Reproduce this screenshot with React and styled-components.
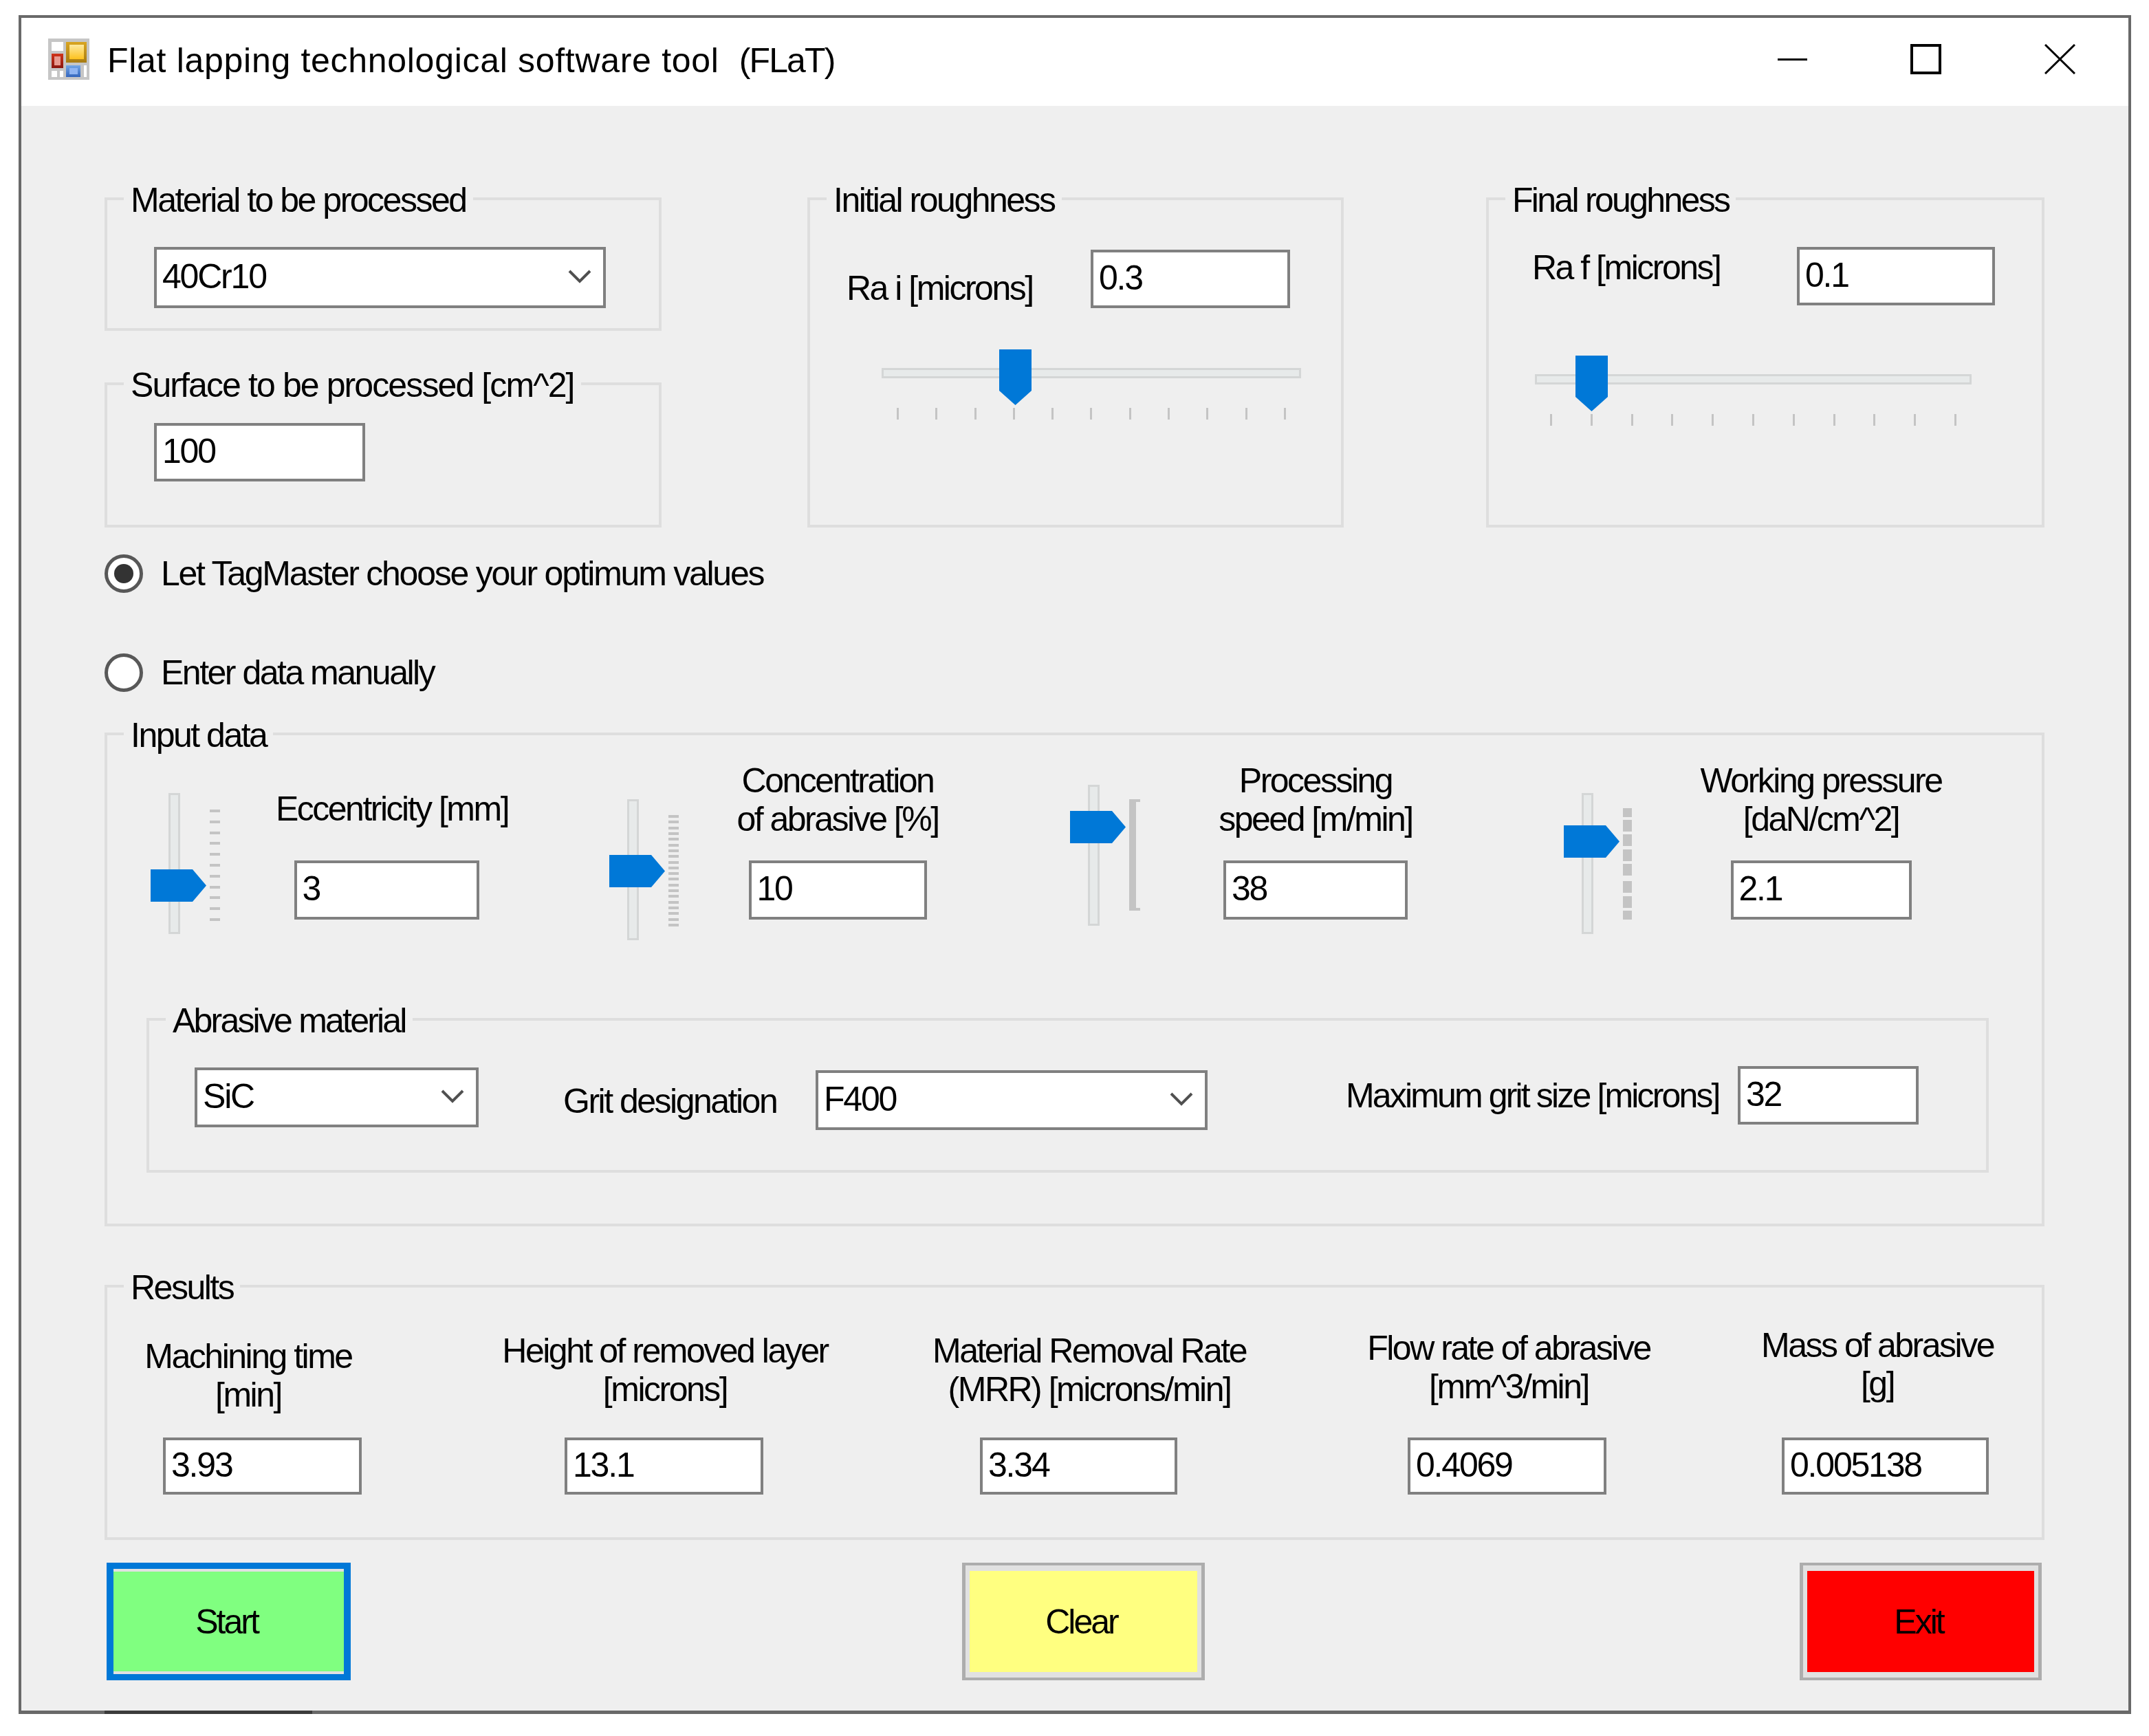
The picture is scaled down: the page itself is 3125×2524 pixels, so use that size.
import React from 'react'
import styled, { createGlobalStyle } from 'styled-components'

const GlobalStyle = createGlobalStyle`
  html, body {
    margin: 0;
    background: #fff;
    font-family: "Liberation Sans", Arial, sans-serif;
    color: #000;
  }
`

const Window = styled.div`
  position: relative;
  box-sizing: border-box;
  width: 3072px;
  height: 2470px;
  margin: 22px 0 0 27px;
  border: 4px solid #696969;
  border-bottom-width: 5px;
  background: #efefef;

  /* darker run along the bottom edge of the frame */
  &::after {
    content: '';
    position: absolute;
    left: 121px;
    bottom: -5px;
    width: 302px;
    height: 5px;
    background: #3c3c3c;
  }
`

const TitleBar = styled.div`
  display: flex;
  align-items: center;
  box-sizing: border-box;
  height: 128px;
  padding: 0 77px 8px 39px;
  background: #fff;
`

const Title = styled.div`
  margin: 4px 0 0 26px;
  font-size: 50px;
  letter-spacing: 0.7px;
  white-space: pre;
`

const TitleTag = styled.span`
  letter-spacing: -1.9px;
`

const CaptionButtons = styled.div`
  display: flex;
  align-items: center;
  gap: 150px;
  margin-left: auto;
`

const Body = styled.div`
  padding: 133px 122px 0 121px;
`

const TopGrid = styled.div`
  display: grid;
  grid-template-columns: 1022px 987px 812px;
  height: 480px;
`

const Stack = styled.div`
  display: flex;
  flex-direction: column;
  gap: 75px;
  width: 810px;
`

const Group = styled.div`
  position: relative;
  box-sizing: border-box;
  width: ${(p) => (p.$width ? `${p.$width}px` : 'auto')};
  height: ${(p) => p.$height}px;
  padding: ${(p) => p.$padding};
  border: 4px solid #dedede;
`

const Legend = styled.div`
  position: absolute;
  top: -28px;
  left: 24px;
  padding: 0 10px;
  background: #efefef;
  font-size: 50px;
  line-height: 56px;
  letter-spacing: ${(p) => p.$spacing || -2.5}px;
  white-space: nowrap;
`

const TextBox = styled.div`
  display: flex;
  align-items: center;
  justify-content: space-between;
  flex: none;
  box-sizing: border-box;
  width: ${(p) => p.$width}px;
  height: ${(p) => p.$height}px;
  margin-top: ${(p) => p.$top || 0}px;
  padding: 0 17px 4px 8px;
  border: 4px solid #808080;
  background: #fff;
  font-size: 50px;
  letter-spacing: -2.2px;
`

const Label = styled.div`
  flex: none;
  width: ${(p) => (p.$width ? `${p.$width}px` : 'auto')};
  margin: ${(p) => p.$top || 0}px 0 0 ${(p) => p.$left || 0}px;
  font-size: 50px;
  line-height: 56px;
  letter-spacing: ${(p) => p.$spacing || -2.5}px;
  white-space: nowrap;
`

const RoughRow = styled.div`
  display: flex;
`

const HSliderBox = styled.div`
  position: relative;
  width: ${(p) => p.$width}px;
  margin: ${(p) => p.$top}px 0 0 ${(p) => p.$left}px;
  padding-top: 27px;
`

const HTrack = styled.div`
  box-sizing: border-box;
  height: 15px;
  border: 3px solid #d4d6d6;
  background: #e7eaea;
`

const HTicks = styled.div`
  display: flex;
  justify-content: space-between;
  margin-top: 43px;
  padding: 0 22px;
`

const HTick = styled.div`
  width: 3px;
  height: 17px;
  background: #c4c4c4;
`

const HThumb = styled.svg`
  position: absolute;
  top: 0;
  left: ${(p) => p.$left}px;
`

const RadioList = styled.div`
  display: flex;
  flex-direction: column;
  gap: 88px;
  margin: 39px 0 59px;
`

const RadioRow = styled.div`
  display: flex;
  align-items: center;
  gap: 26px;
  height: 56px;
`

const RadioCircle = styled.div`
  display: flex;
  align-items: center;
  justify-content: center;
  box-sizing: border-box;
  width: 56px;
  height: 56px;
  border: 5px solid #585858;
  border-radius: 50%;
  background: #fff;

  &::after {
    content: '';
    display: ${(p) => (p.$checked ? 'block' : 'none')};
    width: 28px;
    height: 28px;
    border-radius: 50%;
    background: #333;
  }
`

const SliderRow = styled.div`
  display: grid;
  grid-template-columns: 667px 670px 718px 1fr;
  grid-template-rows: 230px;
  padding-left: 63px;
`

const SliderCell = styled.div`
  display: flex;
`

const VSliderBox = styled.div`
  position: relative;
  display: flex;
  flex: none;
  align-items: flex-start;
  width: 103px;
  height: 205px;
  margin-top: ${(p) => p.$top}px;
`

const VTrack = styled.div`
  flex: none;
  box-sizing: border-box;
  width: 17px;
  height: 205px;
  margin-left: 26px;
  border: 3px solid #d4d6d6;
  background: #e7eaea;
`

const VThumb = styled.svg`
  position: absolute;
  left: 0;
  top: ${(p) => p.$top}px;
`

const TickScale = styled.svg`
  flex: none;
  margin: ${(p) => p.$top}px 0 0 43px;
`

const Field = styled.div`
  display: flex;
  flex: none;
  flex-direction: column;
  align-items: center;
  justify-content: flex-end;
  width: 340px;
  margin-left: ${(p) => p.$left}px;
`

const CenterLabel = styled.div`
  margin-bottom: ${(p) => p.$gap}px;
  margin-left: ${(p) => p.$nudge || 0}px;
  font-size: 50px;
  line-height: 56px;
  letter-spacing: -2.5px;
  text-align: center;
  white-space: pre;
`

const AbrasiveOuter = styled.div`
  width: 2679px;
  margin: 143px 0 0 57px;
`

const AbrasiveRow = styled.div`
  display: flex;
  align-items: flex-start;
`

const ResultsMargin = styled.div`
  margin-top: 85px;
`

const ResultRow = styled.div`
  display: flex;
  height: 301px;
`

const ResultCol = styled.div`
  display: flex;
  flex: none;
  flex-direction: column;
  justify-content: flex-end;
  width: ${(p) => p.$width}px;
  margin-left: ${(p) => p.$left}px;
`

const ResultBox = styled(TextBox)`
  margin-left: ${(p) => p.$inset}px;
`

const ButtonRow = styled.div`
  display: flex;
  margin-top: 33px;
  padding-left: 3px;
`

const ActionButton = styled.button`
  display: flex;
  flex: none;
  box-sizing: border-box;
  width: ${(p) => p.$width}px;
  height: 171px;
  margin-left: ${(p) => p.$left || 0}px;
  padding: ${(p) => (p.$focused ? '4px 0' : '8px 6px')};
  border-style: solid;
  border-color: ${(p) => (p.$focused ? '#0078d7' : '#adadad')};
  border-width: ${(p) => (p.$focused ? '9px 10px' : '4px 5px')};
  background: #e1e1e1;
  font-family: inherit;
`

const ButtonFace = styled.span`
  display: flex;
  align-items: center;
  justify-content: center;
  flex: 1;
  padding-right: 6px;
  background: ${(p) => p.$color};
  color: #000;
  font-size: 50px;
  letter-spacing: -3px;
`

const ticks = (count, span, size) =>
  Array.from({ length: count }, (_, i) => Math.round((i * (span - size)) / (count - 1)))

function AppIcon() {
  return (
    <svg width="60" height="60" viewBox="0 0 60 60">
      <defs>
        <linearGradient id="iconYellow" x1="0" y1="0" x2="0" y2="1">
          <stop offset="0" stopColor="#fde9a0" />
          <stop offset="1" stopColor="#fdc21e" />
        </linearGradient>
        <linearGradient id="iconGold" x1="0" y1="0" x2="0" y2="1">
          <stop offset="0" stopColor="#d9a521" />
          <stop offset="1" stopColor="#a87c12" />
        </linearGradient>
        <linearGradient id="iconRed" x1="0" y1="0" x2="0" y2="1">
          <stop offset="0" stopColor="#d1341a" />
          <stop offset="1" stopColor="#8a1710" />
        </linearGradient>
        <linearGradient id="iconBlue" x1="0" y1="0" x2="0" y2="1">
          <stop offset="0" stopColor="#73a6e6" />
          <stop offset="1" stopColor="#3466bd" />
        </linearGradient>
      </defs>
      <rect width="60" height="60" fill="#c6c6c6" />
      <rect x="5" y="5" width="17" height="13" fill="#fff" />
      <rect x="26" y="5" width="30" height="30" fill="url(#iconGold)" />
      <rect x="31" y="9" width="21" height="21" fill="url(#iconYellow)" />
      <rect x="5" y="22" width="17" height="21" fill="url(#iconRed)" />
      <rect x="9" y="26" width="9" height="13" fill="#e79a90" />
      <rect x="5" y="47" width="8" height="9" fill="#fff" />
      <rect x="17" y="47" width="5" height="9" fill="#fff" />
      <rect x="26" y="39" width="21" height="17" fill="url(#iconBlue)" />
      <rect x="31" y="43" width="12" height="9" fill="#8fb4f2" />
      <rect x="52" y="39" width="4" height="17" fill="#fff" />
    </svg>
  )
}

function Chevron() {
  return (
    <svg width="34" height="22" viewBox="0 0 34 22">
      <path d="M2 3 L17 18 L32 3" fill="none" stroke="#505050" strokeWidth="4" />
    </svg>
  )
}

function ComboBox({ value, width, height = 89, top }) {
  return (
    <TextBox $width={width} $height={height} $top={top}>
      {value}
      <Chevron />
    </TextBox>
  )
}

function HorizontalSlider({ width, left, top, thumb }) {
  return (
    <HSliderBox $width={width} $left={left} $top={top}>
      <HTrack />
      <HTicks>
        {Array.from({ length: 11 }, (_, i) => (
          <HTick key={i} />
        ))}
      </HTicks>
      <HThumb $left={thumb} width="47" height="81" viewBox="0 0 47 81">
        <polygon points="0,0 47,0 47,60 23.5,81 0,60" fill="#0078d7" />
      </HThumb>
    </HSliderBox>
  )
}

function VerticalScale({ kind, top }) {
  let marks
  if (kind === 'solid') {
    marks = (
      <>
        <rect x="0" y="0" width="10" height="162" fill="#c4c4c4" />
        <rect x="0" y="0" width="16" height="4" fill="#c4c4c4" />
        <rect x="0" y="158" width="16" height="4" fill="#c4c4c4" />
      </>
    )
  } else if (kind === 'dashes') {
    const ys = [0, 17, 38, 60, 81, 106, 128, 149]
    marks = ys.map((y, i) => (
      <rect key={y} x="0" y={y} width="13" height={i === 0 || i === 7 ? 13 : 17} fill="#c4c4c4" />
    ))
  } else {
    marks = ticks(kind, 162, 4).map((y) => (
      <rect key={y} x="0" y={y} width="15" height="4" fill="#c4c4c4" />
    ))
  }
  return (
    <TickScale $top={top} width="17" height="162" viewBox="0 0 17 162">
      {marks}
    </TickScale>
  )
}

function VerticalSlider({ top, thumb, scale, scaleTop }) {
  return (
    <VSliderBox $top={top}>
      <VTrack />
      <VerticalScale kind={scale} top={scaleTop} />
      <VThumb $top={thumb} width="81" height="47" viewBox="0 0 81 47">
        <polygon points="0,0 61,0 81,23.5 61,47 0,47" fill="#0078d7" />
      </VThumb>
    </VSliderBox>
  )
}

function AbrasiveBlock() {
  return (
    <AbrasiveOuter>
      <Group $height={225} $padding="66px 0 0 66px">
        <Legend $spacing={-2.8}>Abrasive material</Legend>
        <AbrasiveRow>
          <ComboBox value="SiC" width={413} height={87} top={2} />
          <Label $width={367} $left={123} $top={23}>Grit designation</Label>
          <ComboBox value="F400" width={570} height={87} top={6} />
          <Label $width={570} $left={201} $top={15} $spacing={-2.85}>Maximum grit size [microns]</Label>
          <TextBox $width={263} $height={85}>32</TextBox>
        </AbrasiveRow>
      </Group>
    </AbrasiveOuter>
  )
}

const inputSliders = [
  { label: 'Eccentricity [mm]', value: '3', width: 269, left: 70, gap: 47, nudge: 16, top: 46, thumb: 111, scale: 11, scaleTop: 24 },
  { label: 'Concentration\nof abrasive [%]', value: '10', width: 259, left: 59, gap: 32, top: 55, thumb: 81, scale: 20, scaleTop: 23 },
  { label: 'Processing\nspeed [m/min]', value: '38', width: 268, left: 84, gap: 32, top: 34, thumb: 38, scale: 'solid', scaleTop: 21 },
  { label: 'Working pressure\n[daN/cm^2]', value: '2.1', width: 263, left: 101, gap: 32, top: 46, thumb: 47, scale: 'dashes', scaleTop: 22 },
]

const results = [
  { label: 'Machining time\n[min]', value: '3.93', col: 400, left: 5, gap: 34, box: 289, inset: 76 },
  { label: 'Height of removed layer\n[microns]', value: '13.1', col: 500, left: 156, gap: 42, box: 289, inset: 104 },
  { label: 'Material Removal Rate\n(MRR) [microns/min]', value: '3.34', col: 500, left: 117, gap: 42, box: 287, inset: 91 },
  { label: 'Flow rate of abrasive\n[mm^3/min]', value: '0.4069', col: 460, left: 130, gap: 46, box: 289, inset: 83 },
  { label: 'Mass of abrasive\n[g]', value: '0.005138', col: 400, left: 106, gap: 50, box: 301, inset: 61 },
]

export default function App() {
  return (
    <>
      <GlobalStyle />
      <Window>
        <TitleBar>
          <AppIcon />
          <Title>Flat lapping technological software tool  <TitleTag>(FLaT)</TitleTag></Title>
          <CaptionButtons>
            <svg width="43" height="44" viewBox="0 0 43 44">
              <rect x="0" y="21" width="43" height="3" fill="#000" />
            </svg>
            <svg width="45" height="44" viewBox="0 0 45 44">
              <rect x="2" y="2" width="41" height="40" fill="none" stroke="#000" strokeWidth="4" />
            </svg>
            <svg width="45" height="44" viewBox="0 0 45 44">
              <path d="M1 1 L44 43 M44 1 L1 43" fill="none" stroke="#000" strokeWidth="3" />
            </svg>
          </CaptionButtons>
        </TitleBar>
        <Body>
          <TopGrid>
            <Stack>
              <Group $height={194} $padding="68px 0 0 68px">
                <Legend>Material to be processed</Legend>
                <ComboBox value="40Cr10" width={657} />
              </Group>
              <Group $height={211} $padding="55px 0 0 68px">
                <Legend $spacing={-1.9}>Surface to be processed [cm^2]</Legend>
                <TextBox $width={307} $height={85}>100</TextBox>
              </Group>
            </Stack>
            <Group $width={780} $height={480} $padding="72px 0 0 53px">
              <Legend>Initial roughness</Legend>
              <RoughRow>
                <Label $width={355} $top={28}>Ra i [microns]</Label>
                <TextBox $width={290} $height={85}>0.3</TextBox>
              </RoughRow>
              <HorizontalSlider width={610} left={51} top={60} thumb={171} />
            </Group>
            <Group $width={812} $height={480} $padding="68px 0 0 63px">
              <Legend $spacing={-2.7}>Final roughness</Legend>
              <RoughRow>
                <Label $width={385} $top={2}>Ra f [microns]</Label>
                <TextBox $width={288} $height={85}>0.1</TextBox>
              </RoughRow>
              <HorizontalSlider width={635} left={4} top={73} thumb={59} />
            </Group>
          </TopGrid>

          <RadioList>
            <RadioRow>
              <RadioCircle $checked />
              <Label $spacing={-2.25}>Let TagMaster choose your optimum values</Label>
            </RadioRow>
            <RadioRow>
              <RadioCircle />
              <Label>Enter data manually</Label>
            </RadioRow>
          </RadioList>

          <Group $height={718} $padding="38px 0 0 0">
            <Legend>Input data</Legend>
            <SliderRow>
              {inputSliders.map((item) => (
                <SliderCell key={item.label}>
                  <VerticalSlider top={item.top} thumb={item.thumb} scale={item.scale} scaleTop={item.scaleTop} />
                  <Field $left={item.left}>
                    <CenterLabel $gap={item.gap} $nudge={item.nudge}>{item.label}</CenterLabel>
                    <TextBox $width={item.width} $height={86}>{item.value}</TextBox>
                  </Field>
                </SliderCell>
              ))}
            </SliderRow>
            <AbrasiveBlock />
          </Group>

          <ResultsMargin>
            <Group $height={371} $padding="0">
              <Legend>Results</Legend>
              <ResultRow>
                {results.map((item) => (
                  <ResultCol key={item.label} $width={item.col} $left={item.left}>
                    <CenterLabel $gap={item.gap}>{item.label}</CenterLabel>
                    <ResultBox $width={item.box} $height={83} $inset={item.inset}>{item.value}</ResultBox>
                  </ResultCol>
                ))}
              </ResultRow>
            </Group>
          </ResultsMargin>

          <ButtonRow>
            <ActionButton $focused $width={355}><ButtonFace $color="#80ff80">Start</ButtonFace></ActionButton>
            <ActionButton $width={353} $left={889}><ButtonFace $color="#ffff80">Clear</ButtonFace></ActionButton>
            <ActionButton $width={352} $left={865}><ButtonFace $color="#ff0000">Exit</ButtonFace></ActionButton>
          </ButtonRow>
        </Body>
      </Window>
    </>
  )
}
